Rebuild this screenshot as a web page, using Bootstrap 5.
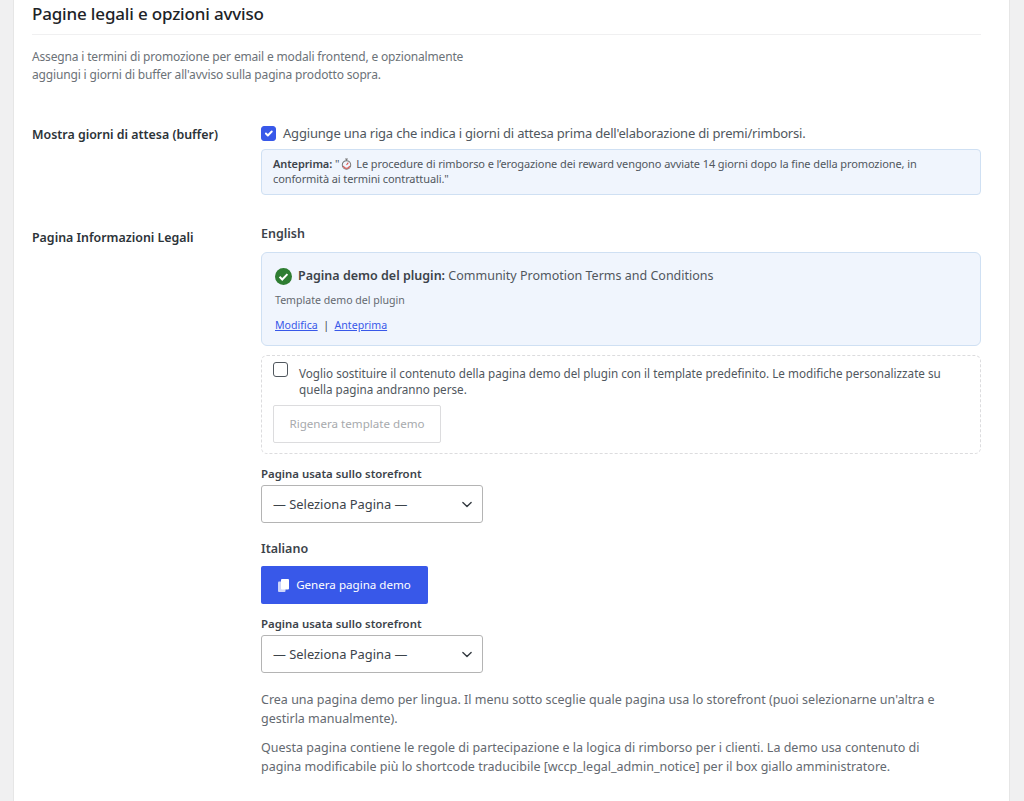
<!DOCTYPE html>
<html lang="it"><head><meta charset="utf-8"><title>Pagine legali</title>
<link rel="stylesheet" href="https://cdn.jsdelivr.net/npm/bootstrap@5.3.0/dist/css/bootstrap.min.css">
<style>
html,body{height:801px;overflow:hidden}
body{background:#f0f0f1;font-family:"Noto Sans","Open Sans",sans-serif;color:#3c434a;font-size:13px}
.sheet{margin:0 14px 0 13px;background:#fff;border-left:1px solid #e6e6e6;border-right:1px solid #e6e6e6;height:801px;padding:0 28px 0 18px}
.sheet-title{font-size:17px;font-weight:500;letter-spacing:-.01em;color:#1d2327;line-height:22px;padding:3px 0 9px;margin:0;border-bottom:1px solid #f0f0f1}
.sheet-intro{font-size:12px;letter-spacing:-.16px;line-height:18px;color:#6c7278;margin:13px 0 0}
.form-line{display:flex}
.form-key{width:229px;flex:none;font-size:12.4px;font-weight:600;color:#2c3338;padding-top:4px}
.form-key.key-first{padding-top:2px}
.form-val{flex:1;min-width:0}
.form-check-input.chk{width:15px;height:15px;margin:0;border-radius:3px;border-color:#50575e;flex:none}
.form-check-input.chk:checked{background-color:#3858e9;border-color:#3858e9}
.chk-text{font-size:13px;letter-spacing:-.19px;line-height:18px;color:#50575e;margin-left:-1px}
.note-box{background:#f0f5fd;border:1px solid #cfe0f3;border-radius:4px;padding:6px 12px 7px 11px;font-size:11px;letter-spacing:-.1px;line-height:15px;color:#50575e;margin-top:7px;height:46px}
.note-box b{font-weight:600;color:#3c434a}
.clock{margin:0 4px 0 2px;vertical-align:-2px}
.lang{font-size:12.5px;font-weight:600;color:#3c434a;line-height:18px}
.demo-box{background:#f0f5fd;border:1px solid #cfe0f3;border-radius:6px;padding:13px 13px;height:94px;margin-top:9px}
.demo-head{font-size:12.5px;line-height:20px;color:#50575e}
.demo-head b{font-weight:600;color:#3c434a}
.demo-head span{margin-left:2px}
.demo-sub{font-size:10.6px;line-height:16px;color:#646970;margin-top:6px}
.demo-links{font-size:10.6px;line-height:16px;margin-top:9px;color:#3c434a}
.demo-links a{color:#3858e9}
.dash-box{border:1px dashed #dcdcde;border-radius:6px;padding:6px 11px 11px;height:99px;margin-top:9px}
.form-check-input.chk-big{width:15px;height:15px;margin:0;border-radius:3px;border-color:#50575e;flex:none}
.dash-text{font-size:11.68px;line-height:16px;color:#50575e;padding-top:4px;margin-left:3px}
.btn.btn-dim{font-size:11.6px;color:#a7aaad;background:#fff;border:1px solid #dcdcde;border-radius:2px;height:38px;width:168px;padding:0;margin-top:7px}
.fld-label{font-size:11.4px;font-weight:600;color:#3c434a;line-height:16px;display:block;margin-bottom:3px}
.form-select.sel{width:222px;height:38px;border:1px solid #b4b4b4;border-radius:3px;font-size:12.9px;color:#3c434a;padding:1px 24px 0 11px;background-position:right 8px center;background-size:14px 11px}
.btn.btn-gen{background:#3858e9;border:none;color:#fff;font-size:11.6px;border-radius:2px;height:38px;width:167px;padding:0;display:flex;align-items:center;justify-content:center;gap:7px;margin-top:8px}
.hint{font-size:12.5px;line-height:19px;color:#646970;margin:0;padding-right:25px}
</style></head><body>
<div class="sheet">
<h2 class="sheet-title">Pagine legali e opzioni avviso</h2>
<p class="sheet-intro">Assegna i termini di promozione per email e modali frontend, e opzionalmente<br>aggiungi i giorni di buffer all'avviso sulla pagina prodotto sopra.</p>
<div class="form-line" style="margin-top:40px">
 <div class="form-key key-first">Mostra giorni di attesa (buffer)</div>
 <div class="form-val">
  <div class="d-flex align-items-center gap-2"><input class="form-check-input chk" type="checkbox" checked aria-label="buffer"><span class="chk-text">Aggiunge una riga che indica i giorni di attesa prima dell'elaborazione di premi/rimborsi.</span></div>
  <div class="note-box"><b>Anteprima:</b> "<svg width="11" height="12" viewBox="0 0 12 13" class="clock"><circle cx="6" cy="7.5" r="4.6" fill="none" stroke="#777" stroke-width="1.1"/><path d="M4.5 1h3M6 1v2" stroke="#777" stroke-width="1.1" fill="none"/><path d="M6 7.5l2-2.5M2.6 8.5a3.5 3.5 0 0 0 6.8 0" stroke="#d9534f" stroke-width="1.1" fill="none"/></svg>Le procedure di rimborso e l’erogazione dei reward vengono avviate 14 giorni dopo la fine della promozione, in conformità ai termini contrattuali."</div>
 </div>
</div>
<div class="form-line" style="margin-top:30px">
 <div class="form-key">Pagina Informazioni Legali</div>
 <div class="form-val">
  <div class="lang">English</div>
  <div class="demo-box">
   <div class="demo-head d-flex align-items-center gap-1"><svg width="17" height="17" viewBox="0 0 16 16"><circle cx="8" cy="8" r="8" fill="#2e7d32"/><path d="M4.3 8.3l2.5 2.5 4.9-5" fill="none" stroke="#fff" stroke-width="1.9"/></svg><span><b>Pagina demo del plugin:</b> Community Promotion Terms and Conditions</span></div>
   <div class="demo-sub">Template demo del plugin</div>
   <div class="demo-links"><a href="#">Modifica</a> &nbsp;|&nbsp; <a href="#">Anteprima</a></div>
  </div>
  <div class="dash-box">
   <div class="d-flex gap-2"><input class="form-check-input chk-big" type="checkbox" aria-label="sostituire"><div class="dash-text">Voglio sostituire il contenuto della pagina demo del plugin con il template predefinito. Le modifiche personalizzate su quella pagina andranno perse.</div></div>
   <button class="btn btn-dim" type="button">Rigenera template demo</button>
  </div>
  <label class="fld-label" style="margin-top:12px">Pagina usata sullo storefront</label>
  <select class="form-select sel" aria-label="Pagina"><option>— Seleziona Pagina —</option></select>
  <div class="lang" style="margin-top:17px">Italiano</div>
  <button class="btn btn-gen" type="button"><svg width="11" height="13" viewBox="0 0 11 13"><rect x="3" width="8" height="10.5" rx="1" fill="#fff"/><rect y="2.5" width="7.5" height="10.5" rx="1" fill="#fff" fill-opacity=".75"/></svg>Genera pagina demo</button>
  <label class="fld-label" style="margin-top:12px">Pagina usata sullo storefront</label>
  <select class="form-select sel" aria-label="Pagina"><option>— Seleziona Pagina —</option></select>
  <p class="hint" style="margin-top:17px">Crea una pagina demo per lingua. Il menu sotto sceglie quale pagina usa lo storefront (puoi selezionarne un'altra e gestirla manualmente).</p>
  <p class="hint" style="margin-top:10px">Questa pagina contiene le regole di partecipazione e la logica di rimborso per i clienti. La demo usa contenuto di pagina modificabile più lo shortcode traducibile [wccp_legal_admin_notice] per il box giallo amministratore.</p>
 </div>
</div>
</div>
</body></html>
